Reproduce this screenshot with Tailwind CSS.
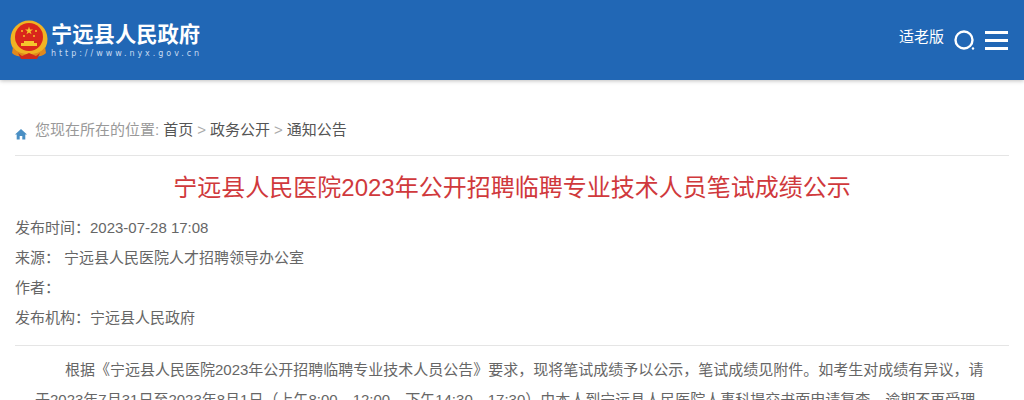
<!DOCTYPE html>
<html lang="zh-CN">
<head>
<meta charset="utf-8">
<script src="https://cdn.jsdelivr.net/npm/@tailwindcss/browser@4"></script>
<title>宁远县人民医院2023年公开招聘临聘专业技术人员笔试成绩公示</title>
</head>
<body class="bg-white font-['Liberation_Sans','Noto_Sans_CJK_SC',sans-serif] h-[400px] overflow-hidden text-[#666]">
<header class="h-[80px] bg-[#2167b5] shadow-[0_1px_4px_rgba(0,0,0,0.25)] flex items-start justify-between pl-[10px] pr-[16px]">
  <div class="flex mt-[20px] gap-[3px]">
    <svg width="38" height="40" viewBox="0 0 38 40">
      <circle cx="19" cy="19" r="18.500" fill="#f0b323"/>
      <circle cx="19" cy="17" r="14" fill="#d9261c"/>
      <path d="M19 6.500l1 3h3l-2.500 1.800 1 3-2.500-1.800-2.500 1.800 1-3L15 9.500h3z" fill="#f5c52c"/>
      <circle cx="12" cy="11" r="1" fill="#f5c52c"/><circle cx="26" cy="11" r="1" fill="#f5c52c"/>
      <circle cx="14" cy="16" r="1" fill="#f5c52c"/><circle cx="24" cy="16" r="1" fill="#f5c52c"/>
      <path d="M11 26v-3h3v-2h10v2h3v3z" fill="#f5c52c"/>
      <path d="M3 27c4 6 10 7 16 7s12-1 16-7l1 6c-4 4-10 4-12 3l-5 3-5-3c-2 1-8 1-12-3z" fill="#e0891d"/>
      <path d="M8 33l4 3 7-3 7 3 4-3-3 6H11z" fill="#cf2a1c"/>
    </svg>
    <div class="text-white leading-none">
      <div class="text-[21.300px] font-bold leading-[24px] mt-[3px] whitespace-nowrap">宁远县人民政府</div>
      <div class="text-[8px] leading-[10px] mt-[2px] tracking-[2.950px] text-[#c9dcf2] font-['DejaVu_Sans',sans-serif] whitespace-nowrap">http://www.nyx.gov.cn</div>
    </div>
  </div>
  <div class="flex items-start mt-[27px] text-white">
    <span class="text-[15px] leading-[20px] mr-[10px]">适老版</span>
    <svg class="mt-[3px] mr-[10px]" width="21" height="20" viewBox="0 0 21 20" fill="none">
      <circle cx="10" cy="10" r="8.500" stroke="#fff" stroke-width="2.400"/>
      <circle cx="19" cy="18.500" r="1.200" fill="#fff"/>
    </svg>
    <div class="mt-[4px] w-[23px] flex flex-col gap-[5px]">
      <div class="h-[3px] bg-white"></div>
      <div class="h-[3px] bg-white"></div>
      <div class="h-[3px] bg-white"></div>
    </div>
  </div>
</header>
<main class="px-[15px]">
  <div class="h-[76px] pt-[40px] border-b border-[#e5e5e5] flex items-start text-[15px] leading-[20px] whitespace-nowrap">
    <svg class="mt-[8px] mr-[8px]" width="12" height="12" viewBox="0 0 12 12"><path d="M6 1L0 6.500h1.700V11.500h3V8h2.600v3.500h3V6.500H12z" fill="#4a8fc4"/></svg>
    <span class="text-[#999]">您现在所在的位置:</span>
    <span class="text-[#555] ml-[4px]">首页</span>
    <span class="text-[#aaa] mx-[4px]">&gt;</span>
    <span class="text-[#555]">政务公开</span>
    <span class="text-[#aaa] mx-[4px]">&gt;</span>
    <span class="text-[#555]">通知公告</span>
  </div>
  <h1 class="text-center text-[24px] leading-[32px] mt-[16px] text-[#d0393c] font-normal">宁远县人民医院2023年公开招聘临聘专业技术人员笔试成绩公示</h1>
  <div class="mt-[9px] text-[15px] leading-[30px] pb-[12px] border-b border-[#e5e5e5]">
    <div>发布时间：2023-07-28 17:08</div>
    <div class="flex"><span class="w-[49px]">来源：</span><span>宁远县人民医院人才招聘领导办公室</span></div>
    <div>作者：</div>
    <div>发布机构：宁远县人民政府</div>
  </div>
  <p class="mt-[9px] pl-[20px] pr-[15px] text-[15px] leading-[30px] indent-[30px]">根据《宁远县人民医院2023年公开招聘临聘专业技术人员公告》要求，现将笔试成绩予以公示，笔试成绩见附件。如考生对成绩有异议，请于2023年7月31日至2023年8月1日（上午8:00—12:00，下午14:30—17:30）由本人到宁远县人民医院人事科提交书面申请复查，逾期不再受理。</p>
</main>
</body>
</html>
